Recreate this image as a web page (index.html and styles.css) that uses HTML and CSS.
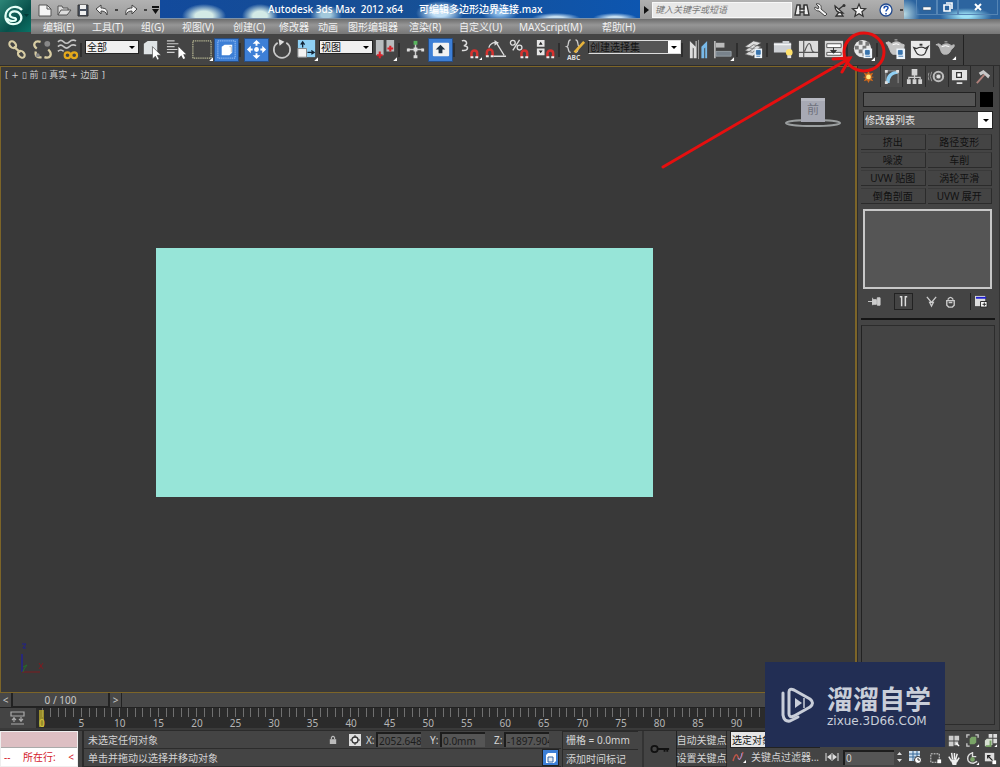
FILE: index.html
```
<!DOCTYPE html>
<html lang="zh-CN">
<head>
<meta charset="utf-8">
<title>Autodesk 3ds Max 2012 x64</title>
<link rel="stylesheet" href="styles.css">
</head>
<body>
<div class="app">
  <header class="header">
    <button class="app-button" aria-label="应用程序">
      <svg width="30" height="32" viewBox="0 0 30 32"><path d="M21 10C17 5 8 6 5 13c-2 7 2 12 9 11 6-1 8-6 5-10-3-4-9-3-10 0-1 3 3 4 5 4 2 1 1 3-2 3-3 0-5-1-6-3" fill="none" stroke="#e4fff7" stroke-width="2.2"/><path d="M23 14l5 0-2.500 3z" fill="#043a37"/></svg>
    </button>
    <div class="titlebar">
      <div class="quick">
        <button aria-label="新建"><svg width="16" height="14" viewBox="0 0 16 14"><path d="M2 2h8l4 4v7H2z" fill="#f4f4f4" stroke="#555"/><path d="M10 2v4h4" fill="none" stroke="#555"/></svg></button>
        <button aria-label="打开"><svg width="16" height="14" viewBox="0 0 16 14"><path d="M2 12V3h4l1 2h5v2M2 12l3-5h10l-4 5z" fill="#ddd" stroke="#555"/></svg></button>
        <button aria-label="保存"><svg width="16" height="14" viewBox="0 0 16 14"><path d="M3 2h10v11H3z" fill="#4b5360" stroke="#333"/><path d="M5 2h6v4H5zM5 8h6v4H5z" fill="#f0f0f0"/></svg></button>
        <button aria-label="撤销"><svg width="16" height="14" viewBox="0 0 16 14"><path d="M2 6l5-4v3c5 0 7 2 6 7-1-3-3-4-6-4v3z" fill="#f2f2f2" stroke="#444"/></svg></button>
        <i class="tick"></i>
        <button aria-label="重做"><svg width="16" height="14" viewBox="0 0 16 14"><path d="M14 6L9 2v3C4 5 2 7 3 12c1-3 3-4 6-4v3z" fill="#f2f2f2" stroke="#444"/></svg></button>
        <i class="tick"></i>
        <button aria-label="自定义快速访问"><svg width="7" height="8" viewBox="0 0 7 8"><path d="M0 0h7v2H0zM0 3h7L3.500 8z" fill="#111"/></svg></button>
      </div>
      <div class="title"><span>Autodesk 3ds Max&nbsp; 2012 x64</span><span>可编辑多边形边界连接.max</span></div>
      <div class="infocenter">
        <button class="reveal" aria-label="展开搜索"><svg width="5" height="8" viewBox="0 0 5 8"><path d="M0 0l5 4-5 4z" fill="#111"/></svg></button>
        <input class="search" type="text" placeholder="键入关键字或短语" aria-label="搜索">
        <button aria-label="查找"><svg width="18" height="16" viewBox="0 0 18 16"><path d="M4 3h3v4h4V3h3l2 10h-5v-3H7v3H2z" fill="#eee" stroke="#333" stroke-width="1.300"/><path d="M7 3v7M11 3v7" stroke="#333"/></svg></button>
        <button aria-label="密钥"><svg width="18" height="16" viewBox="0 0 18 16"><path d="M4 2c3-1 6 1 5 5l6 5-2 2-6-5C3 9 2 6 3 5l3 2 1-2z" fill="#f4f4f4" stroke="#444"/></svg></button>
        <button aria-label="通讯中心"><svg width="18" height="16" viewBox="0 0 18 16"><path d="M4 4c0 5 3 7 8 7zM8 7l4-3M8 10l-3 4h7l-2-3" fill="#eee" stroke="#333" stroke-width="1.300"/><circle cx="13" cy="3.500" r="1.500" fill="#333"/></svg></button>
        <button aria-label="收藏夹"><svg width="18" height="16" viewBox="0 0 18 16"><path d="M9 2l1.800 4.400 4.700.3-3.600 3 1.200 4.600L9 11.800l-4.100 2.500 1.200-4.600-3.600-3 4.700-.3z" fill="#f4f4f4" stroke="#333" stroke-width="1.200"/></svg></button>
        <button class="help" aria-label="帮助"><svg width="16" height="16" viewBox="0 0 16 16"><circle cx="8" cy="8" r="6" fill="#fff" stroke="#234a8d" stroke-width="1.300"/><path d="M6 6.500c0-3 4-3 4-.5 0 1.500-2 1.500-2 3.500M8 11v1.500" fill="none" stroke="#1b4fb0" stroke-width="1.500"/></svg></button>
        <i class="tick"></i>
      </div>
      <div class="window-buttons">
        <button aria-label="最小化"><svg width="12" height="10" viewBox="0 0 12 10"><path d="M2 5h8v3H2z" fill="#fff" stroke="#456"  stroke-width=".5"/></svg></button>
        <button aria-label="还原"><svg width="12" height="10" viewBox="0 0 12 10"><path d="M4 1h6v6M2 3h6v6H2z" fill="none" stroke="#fff" stroke-width="1.600"/></svg></button>
        <button class="close" aria-label="关闭"><svg width="12" height="10" viewBox="0 0 12 10"><path d="M3 2l6 6M9 2L3 8" stroke="#fff" stroke-width="2"/></svg></button>
      </div>
    </div>
    <nav class="menu">
      <button>编辑(E)</button><button>工具(T)</button><button>组(G)</button><button>视图(V)</button><button>创建(C)</button><button>修改器</button><button>动画</button><button>图形编辑器</button><button>渲染(R)</button><button>自定义(U)</button><button>MAXScript(M)</button><button>帮助(H)</button>
    </nav>
  </header>

  <div class="toolbar">
    <button class="tool" aria-label="选择并链接"><svg viewBox="0 0 24 24"><g fill="none" stroke="#d8cda4" stroke-width="2.200"><ellipse cx="7" cy="7" rx="4" ry="3" transform="rotate(45 7 7)"/><ellipse cx="16" cy="17" rx="4" ry="3" transform="rotate(45 16 17)"/><path d="M8 9l7 6"/></g></svg></button>
    <button class="tool" aria-label="断开链接"><svg viewBox="0 0 24 24"><g fill="none" stroke="#d8cda4" stroke-width="2.400"><path d="M10 4C4 2 1 7 6 11M14 20c6 2 9-3 4-8M5 14c-1 5 2 7 6 6"/></g><circle cx="17" cy="6" r="3" fill="#888"/><circle cx="7" cy="18" r="2" fill="#888"/></svg></button>
    <button class="tool" aria-label="绑定到空间扭曲"><svg viewBox="0 0 24 24"><path d="M2 4q3-3 6 0t6 0 7-1M2 9q3-3 6 0t6 0 7-1M2 14q3-3 6 0" fill="none" stroke="#c4c4c4" stroke-width="1.600"/><g fill="none" stroke="#e5a91b" stroke-width="2.200"><circle cx="12" cy="18" r="3"/><circle cx="19" cy="18" r="3"/></g></svg></button>
    <i class="sep"></i>
    <span class="combo combo-filter"><select aria-label="选择过滤器"><option>全部</option></select></span>
    <button class="tool" aria-label="选择对象"><svg viewBox="0 0 24 24"><path d="M4 6l4-3h10v11l-4 3H4z" fill="#dfe3e5"/><path d="M13 9v13l3-3 2 4 2-1-2-4h4z" fill="#fff" stroke="#444" stroke-width=".7"/></svg></button>
    <button class="tool" aria-label="按名称选择"><svg viewBox="0 0 24 24"><path d="M2 3h8M2 6h12M2 9h8M2 12h11M2 15h8" stroke="#ccc" stroke-width="1.300"/><path d="M14 9v12l3-3 2 4 2-1-2-4h3z" fill="#fff"/></svg></button>
    <button class="tool" aria-label="矩形选择区域"><svg viewBox="0 0 24 24"><path d="M3 3h19v18H3z" fill="none" stroke="#d5d5a8" stroke-width="1.300" stroke-dasharray="1 1"/><path d="M20 24l4-4v4z" fill="#fff"/></svg></button>
    <button class="tool on" aria-label="窗口/交叉"><svg viewBox="0 0 24 24"><path d="M3 3h18v18H3z" fill="none" stroke="#bcd8ff" stroke-dasharray="1 1"/><path d="M7 9l3-2h8v8l-3 3H7z" fill="#fff"/><path d="M15 9h2v6" stroke="#bbb" fill="none"/></svg></button>
    <i class="sep"></i>
    <button class="tool on" aria-label="选择并移动"><svg viewBox="0 0 24 24"><g fill="#fff"><path d="M12 2l4 4H8zM12 22l4-4H8zM2 12l4-4v8zM22 12l-4-4v8z"/><circle cx="12" cy="12" r="2.500"/></g><path d="M12 5v3m0 8v3M5 12h3m8 0h3" stroke="#fff" stroke-width="2"/></svg></button>
    <button class="tool" aria-label="选择并旋转"><svg viewBox="0 0 24 24"><path d="M17 5a8.500 8.500 0 1 1-9 0" fill="none" stroke="#c9c9c9" stroke-width="1.800"/><path d="M9 1l6 3-5 4z" fill="#ddd"/></svg></button>
    <button class="tool" aria-label="选择并缩放"><svg viewBox="0 0 24 24"><path d="M3 2h18v18H3z" fill="#8fd0f4"/><path d="M3 11h9v9H3z" fill="#f3f3f3" stroke="#888"/><path d="M8 10V5m-2 2l2-3 2 3M13 15h6m-2-2l3 2-3 2" fill="none" stroke="#123" stroke-width="1.300"/><path d="M20 24l4-4v4z" fill="#fff"/></svg></button>
    <span class="combo combo-coord"><select aria-label="参考坐标系"><option>视图</option></select></span>
    <button class="tool" aria-label="使用轴点中心"><svg viewBox="0 0 24 24"><path d="M2 2h8v16H2zM13 2h8v12h-8z" fill="#b9bcbe"/><path d="M6 14v7M3 18h6M17 8v6M14 11h6" stroke="#d6232a" stroke-width="2.200"/><path d="M20 24l4-4v4z" fill="#fff"/></svg></button>
    <i class="sep"></i>
    <button class="tool" aria-label="选择并操纵"><svg viewBox="0 0 24 24"><path d="M12 4v16M4 12h16" stroke="#ccc" stroke-width="1.500"/><path d="M10 3h4v4h-4z" fill="#58b45d"/><path d="M10 10h4v4h-4zM3 11h3v3H3zM18 11h3v3h-3zM10 18h4v3h-4z" fill="#ddd"/></svg></button>
    <button class="tool on" aria-label="键盘快捷键覆盖"><svg viewBox="0 0 24 24"><rect x="4" y="5" width="17" height="14" rx="1" fill="#f2f2f2"/><path d="M12 7l5 5h-3v4h-4v-4H7z" fill="#234"/></svg></button>
    <i class="sep"></i>
    <button class="tool" aria-label="捕捉开关"><svg viewBox="0 0 24 24"><path d="M3 3c5-2 7 4 2 5 6 0 5 6-2 5" fill="none" stroke="#ddd" stroke-width="1.600"/><path d="M13 20v-4a3 3 0 0 1 6 0v4" fill="none" stroke="#d6322f" stroke-width="2.600"/><path d="M12 20h3M17 20h3" stroke="#eee" stroke-width="2"/><path d="M21 23l3-3v3z" fill="#fff"/></svg></button>
    <button class="tool" aria-label="角度捕捉"><svg viewBox="0 0 24 24"><path d="M10 19h13M13 5l8 13M5 10c1-4 5-6 10-5" fill="none" stroke="#ddd" stroke-width="1.400"/><path d="M11 2l4 3-4 3" fill="#ddd"/><path d="M3 19v-4a3 3 0 0 1 6 0v4" fill="none" stroke="#d6322f" stroke-width="2.600"/><path d="M2 19h3M7 19h3" stroke="#eee" stroke-width="2"/></svg></button>
    <button class="tool" aria-label="百分比捕捉"><svg viewBox="0 0 24 24"><g fill="none" stroke="#ddd" stroke-width="1.400"><circle cx="4" cy="5" r="2.500"/><circle cx="11" cy="10" r="2.500"/><path d="M11 2L4 13"/></g><path d="M13 20v-4a3 3 0 0 1 6 0v4" fill="none" stroke="#d6322f" stroke-width="2.600"/><path d="M12 20h3M17 20h3" stroke="#eee" stroke-width="2"/></svg></button>
    <button class="tool" aria-label="微调器捕捉"><svg viewBox="0 0 24 24"><path d="M3 2h8v7H3zM3 11h8v7H3z" fill="#e5e5e5"/><path d="M5 7l2-3 2 3zM5 13l2 3 2-3z" fill="#222"/><path d="M14 20v-4a3 3 0 0 1 6 0v4" fill="none" stroke="#d6322f" stroke-width="2.600"/><path d="M13 20h3M18 20h3" stroke="#eee" stroke-width="2"/></svg></button>
    <i class="sep"></i>
    <button class="tool" aria-label="编辑命名选择集"><svg viewBox="0 0 24 24"><path d="M7 2C3 2 6 8 3 9c3 1 0 6 4 6M12 2c4 0 1 6 4 7-3 1 0 6-4 6" fill="none" stroke="#ccc" stroke-width="1.400"/><path d="M10 14l10-11 2 2-10 11z" fill="#e7b33b"/><text x="3" y="23" class="abc">ABC</text></svg></button>
    <span class="combo combo-sets"><select aria-label="命名选择集"><option>创建选择集</option></select></span>
    <i class="sep"></i>
    <button class="tool" aria-label="镜像"><svg viewBox="0 0 24 24"><path d="M3 3l6 6V3h1v18H7V11l-1-1v11H3z" fill="#ddd"/><path d="M12 2v20" stroke="#999"/><path d="M21 3l-6 6v12h3V11l1-1v11h2z" fill="#78b9e8"/></svg></button>
    <button class="tool" aria-label="对齐"><svg viewBox="0 0 24 24"><path d="M3 3v18" stroke="#ccc" stroke-width="1.500"/><path d="M4 5h9v5H4z" fill="#bbb"/><path d="M4 14h16v5H4z" fill="#78828b" stroke="#a9b2ba" stroke-width=".7"/><path d="M19 24l4-4v4z" fill="#fff"/></svg></button>
    <i class="sep"></i>
    <button class="tool" aria-label="层管理器"><svg viewBox="0 0 24 24"><path d="M3 9l9-6 8 2-9 6zM3 13l9-6 8 2-9 6zM3 17l9-6 8 2-9 6z" fill="#ddd" stroke="#555" stroke-width=".7"/><path d="M13 11h8v10h-8z" fill="#eef5fb"/><path d="M15 13h4v4h-4zM15 19h4" fill="#3874ad" stroke="#3874ad"/></svg></button>
    <i class="sep"></i>
    <button class="tool" aria-label="石墨建模工具"><svg viewBox="0 0 24 24"><path d="M2 5h9V3h7v2h2v10H2z" fill="#cdd0d4"/><path d="M2 7h18" stroke="#fff"/><circle cx="18" cy="15" r="3.500" fill="#ffe16b"/><path d="M16 18h4v3h-4z" fill="#ddd"/></svg></button>
    <button class="tool" aria-label="曲线编辑器"><svg viewBox="0 0 24 24"><path d="M2 3h20v17H2z" fill="#ddd"/><path d="M7 3v17M2 15h20M8 14c4-11 6-10 7-3 1 4 3 4 6 4" fill="none" stroke="#555" stroke-width="1.200"/></svg></button>
    <button class="tool" aria-label="图解视图"><svg viewBox="0 0 24 24"><path d="M3 3h19v17H3z" fill="#d8d8d8"/><path d="M5 6h15v4H5zM5 15h15v3H5z" fill="#fff" stroke="#555"/><path d="M12 10v4m-3-1h6l-3 3z" fill="#333" stroke="#333"/></svg></button>
    <i class="sep"></i>
    <button class="tool" aria-label="材质编辑器"><svg viewBox="0 0 24 24"><circle cx="11" cy="11" r="9" fill="#e8e8e8"/><path d="M7 3h4v4H7zM14 4h4v4h-4zM3 8h4v4H3zM11 8h4v4h-4zM7 12h4v4H7zM11 16h4v3h-4z" fill="#787878"/><path d="M12 11h9v10h-9z" fill="#eef5fb"/><path d="M14 13h4v4h-4zM14 19h5" fill="#3874ad" stroke="#3874ad"/><path d="M20 24l4-4v4z" fill="#fff"/></svg></button>
    <i class="sep wide"></i>
    <button class="tool" aria-label="渲染设置"><svg viewBox="0 0 24 24"><path d="M2 5l3-1 3 2c1-1 3-2 5-2s4 1 5 2l3 1c0 5-2 9-5 10H9C6 15 6 9 2 5zM11 2h3" fill="#c4c4c4" stroke="#c4c4c4"/><path d="M9 7q4-2 7 0" fill="none" stroke="#fff"/><path d="M13 11h9v11h-9z" fill="#eef5fb"/><path d="M15 13h4v4h-4zM15 19h5" fill="#3874ad" stroke="#3874ad"/></svg></button>
    <button class="tool" aria-label="渲染帧窗口"><svg viewBox="0 0 24 24"><path d="M2 3h20v18H2z" fill="#e9e9e9"/><path d="M5 10l3 1c3-2 7-2 9 0l3-2-2 4c-1 4-2 5-5 5s-5-1-6-4z" fill="#eee" stroke="#333" stroke-width="1.300"/><path d="M11 7h3" stroke="#333" stroke-width="2"/></svg></button>
    <button class="tool" aria-label="渲染产品"><svg viewBox="0 0 24 24"><path d="M2 7l3-1 3 2c1-1 3-2 5-2s4 1 5 2l3-1c1 3-3 4-4 7-1 2-3 3-5 3-3 0-4-1-5-4-1-4-3-6-5-6zM11 4h3" fill="#b8b8b8" stroke="#b8b8b8"/><path d="M8 9q4-2 8 0" stroke="#fff" fill="none"/><path d="M19 23l4-4v4z" fill="#fff"/></svg></button>
    <i class="toolbar-end"></i>
  </div>

  <main class="main">
    <section class="stage">
      <div class="viewport">
        <div class="viewport-label">[ + ▯ 前 ▯ 真实 + 边面 ]</div>
        <div class="plane"></div>
        <svg class="viewcube" width="60" height="32" viewBox="0 0 60 32"><ellipse cx="29" cy="26" rx="27" ry="3" fill="none" stroke="#9b9fa0" stroke-width="2"/><path d="M17 1h24v24H17z" fill="#a7a9b4"/><path d="M17 1h24v3H17z" fill="#b7b9c2"/><text x="29" y="17" text-anchor="middle" class="cube-text">前</text></svg>
        <svg class="axis" width="34" height="34" viewBox="0 0 34 34"><path d="M5 11v18" stroke="#20209c" stroke-width="1.300"/><path d="M5 29h18" stroke="#7c1c20"/><path d="M6 24l4-2-3 4-1 3" stroke="#236e2c" fill="none"/><path d="M5 1h4l-3 4h3" stroke="#20208c" fill="none"/><path d="M22 20l4 6M26 20l-4 6" stroke="#7c1c20"/></svg>
      </div>
      <div class="slider">
        <button aria-label="上一帧">&lt;</button><button class="thumb">0 / 100</button><button aria-label="下一帧">&gt;</button>
      </div>
      <div class="track">
        <button class="curve-toggle" aria-label="打开迷你曲线编辑器"><svg width="16" height="14" viewBox="0 0 16 14"><path d="M1 1h13v4H1zM1 13h13M4 6v5M11 6v5M2 9l2-2 2 2M9 8l2 2 2-2" fill="none" stroke="#aaa" stroke-width="1.200"/></svg></button>
        <div class="ruler"><span class="current">0</span><span class="single">5</span><span>10</span><span>15</span><span>20</span><span>25</span><span>30</span><span>35</span><span>40</span><span>45</span><span>50</span><span>55</span><span>60</span><span>65</span><span>70</span><span>75</span><span>80</span><span>85</span><span>90</span><span>95</span></div>
      </div>
    </section>

    <aside class="panel">
      <div class="tabs">
        <button aria-label="创建"><svg viewBox="0 0 18 18"><path d="M9 3l1.500 3L14 5l-2 4 3 .5-3 1 2 3.500-3.500-1L9 16l-1.500-3L4 14l2-3.500-3-1L6 9 4 5l3.500 1z" fill="#d36a1b"/><circle cx="9" cy="9.500" r="2.500" fill="#ffe780"/></svg></button>
        <button class="active" aria-label="修改"><svg viewBox="0 0 18 18"><path d="M3 16C3 8 8 3 16 3v3C10 6 7 10 7 16z" fill="#8fcff4"/><path d="M3 16V3h13v13" fill="none" stroke="#999"/><path d="M2 2h3v3H2zM14 2h3v3h-3zM2 14h3v3H2z" fill="#ddd"/></svg></button>
        <button aria-label="层次"><svg viewBox="0 0 18 18"><path d="M6 1h6v7H6zM1 12h4v5H1zM7 12h4v5H7zM13 12h4v5h-4z" fill="#d2d2d2"/><path d="M9 7v5M3 12V10h12v2" fill="none" stroke="#ccc" stroke-width="1.300"/></svg></button>
        <button aria-label="运动"><svg viewBox="0 0 18 18"><circle cx="11" cy="9" r="5" fill="none" stroke="#bbb" stroke-width="2.200"/><circle cx="11" cy="9" r="2.500" fill="#ddd" stroke="#777"/><path d="M4 4q-3 5 0 10M1 5q-2 4 0 8" fill="none" stroke="#999"/></svg></button>
        <button aria-label="显示"><svg viewBox="0 0 18 18"><path d="M1 2h16v11H1zM6 15h6v2H6z" fill="#e2e2e2"/><path d="M6 5h5v5H6z" fill="#fff" stroke="#333" stroke-width="1.300"/></svg></button>
        <button aria-label="工具"><svg viewBox="0 0 18 18"><path d="M3 16L12 6" stroke="#b1817b" stroke-width="2"/><path d="M5 5l5-3 7 6-2 3-5-5-3 2z" fill="#c9c9c9"/></svg></button>
      </div>
      <div class="name-row"><input type="text" aria-label="对象名称"><button class="swatch" aria-label="对象颜色"></button></div>
      <span class="combo combo-mods"><select aria-label="修改器列表"><option>修改器列表</option></select></span>
      <div class="mod-buttons">
        <button>挤出</button><button>路径变形</button><button>噪波</button><button>车削</button><button>UVW 贴图</button><button>涡轮平滑</button><button>倒角剖面</button><button>UVW 展开</button>
      </div>
      <div class="stack"></div>
      <div class="stack-tools">
        <button aria-label="锁定堆栈"><svg viewBox="0 0 16 14"><path d="M1 7h5M6 3v8M6 5h4v5H6zM11 3v8h3V3z" fill="#ccc" stroke="#ccc"/></svg></button>
        <button class="pressed" aria-label="显示最终结果"><svg viewBox="0 0 16 14"><path d="M4 2h2v10M12 2h-2v10" fill="none" stroke="#ddd" stroke-width="1.600"/></svg></button>
        <button aria-label="使唯一"><svg viewBox="0 0 16 14"><path d="M3 2l5 6 5-6M6 8h4l-2 4z" fill="none" stroke="#ccc" stroke-width="1.400"/></svg></button>
        <button aria-label="移除修改器"><svg viewBox="0 0 16 14"><path d="M4 6h8v5l-2 2H6l-2-2zM5 5q3-5 6 0M6 8h4" fill="none" stroke="#ccc" stroke-width="1.500"/></svg></button>
        <button class="config" aria-label="配置修改器集"><svg viewBox="0 0 16 14"><path d="M1 1h11v11H1z" fill="#ddd"/><path d="M2 2h11v2H2z" fill="#2020d0"/><path d="M7 7h7v6H7z" fill="#fff" stroke="#222"/><path d="M9 10h4M11 8v4" stroke="#222"/></svg></button>
      </div>
      <div class="rollouts"></div>
    </aside>
  </main>

  <footer class="status">
    <div class="listener"><div class="macro"></div><div class="script-line"><span>--</span><span>所在行:</span><span>&lt;</span></div></div>
    <div class="messages">
      <div class="row">
        <div class="message">未选定任何对象</div>
        <button class="mini" aria-label="选择锁定切换"><svg width="8" height="10" viewBox="0 0 10 12"><path d="M1 5h8v6H1z" fill="#bbb"/><path d="M3 5V3q2-3 4 0v2M4 8h2" fill="none" stroke="#bbb" stroke-width="1.400"/></svg></button>
        <button class="mini" aria-label="绝对模式"><svg width="12" height="12" viewBox="0 0 12 12"><path d="M0 0h12v12H0z" fill="#ddd"/><circle cx="6" cy="6" r="3" fill="#eee" stroke="#333" stroke-width="1.300"/><path d="M6 1v2M6 9v2M1 6h2M9 6h2" stroke="#333"/></svg></button>
        <div class="coords">
          <label class="coord">X:<input type="text" value="2052.648mm"></label>
          <label class="coord">Y:<input type="text" value="0.0mm"></label>
          <label class="coord">Z:<input type="text" value="-1897.904mm"></label>
        </div>
      </div>
      <div class="row">
        <div class="message">单击并拖动以选择并移动对象</div>
        <button class="degrade" aria-label="自适应降级"><svg width="12" height="12" viewBox="0 0 12 12"><path d="M1 3l2-2h8v8l-2 2H1z" fill="#fff"/><path d="M3 5h5v5H3z" fill="#e6ebf2" stroke="#3566a8"/></svg></button>
      </div>
    </div>
    <div class="grid-info"><div class="field">栅格 = 0.0mm</div><button class="field">添加时间标记</button></div>
    <button class="set-key" aria-label="设置关键点"><svg width="20" height="12" viewBox="0 0 22 12"><circle cx="5" cy="6" r="3.500" fill="none" stroke="#111" stroke-width="2"/><path d="M8 6h13M16 6v3M19 6v3" stroke="#111" stroke-width="2"/></svg></button>
    <div class="keys"><button>自动关键点</button><button>设置关键点</button></div>
    <div class="key-modes">
      <select class="key-target" aria-label="关键点对象"><option>选定对象</option></select>
      <div class="row">
        <button class="mini tangent" aria-label="默认切线"><svg width="16" height="14" viewBox="0 0 16 14"><path d="M2 11Q5 1 7 7t5-5" fill="none" stroke="#bd5548" stroke-width="1.500"/><path d="M7 8q2 5 4-5" fill="none" stroke="#8b8fd8"/><path d="M12 13l3-3v3z" fill="#fff"/></svg></button>
        <button class="filters">关键点过滤器...</button>
        <button class="mini" aria-label="关键点模式"><svg width="14" height="8" viewBox="0 0 14 8"><path d="M1 0v8M13 0v8M7 0v8" stroke="#ddd"/><path d="M6 1v6L2 4zM8 1v6l4-3z" fill="#ddd"/></svg></button>
        <input class="frame" type="text" value="0" aria-label="当前帧">
        <span class="spinner"><svg width="7" height="12" viewBox="0 0 7 12"><path d="M1 4l2.500-3L6 4zM1 8l2.500 3L6 8z" fill="#ddd"/></svg></span>
        <button class="mini" aria-label="时间配置"><svg width="14" height="14" viewBox="0 0 14 14"><path d="M1 1h11v10H1z" fill="#cfe0ee"/><path d="M1 4h11M1 7h11M5 1v10M9 1v10" stroke="#356796"/><circle cx="10" cy="10" r="3.500" fill="#fff" stroke="#333"/><path d="M10 8v2h2" fill="none" stroke="#333"/></svg></button>
      </div>
    </div>
    <div class="nav">
      <i></i>
      <button aria-label="缩放所有视图"><svg viewBox="0 0 16 16"><path d="M3 3h5v5H3zM9 3h5v5H9zM3 9h5v5H3zM9 9h4v4H9z" fill="#ccc"/><path d="M11 11l3 3" stroke="#fff" stroke-width="1.500"/></svg></button>
      <button aria-label="最大化显示"><svg viewBox="0 0 16 16"><path d="M2 5V2h3M11 2h3v3M2 11v3h3" fill="none" stroke="#ccc" stroke-width="1.400"/><path d="M5 6l2-2h5v6l-2 2H5z" fill="#7aa467"/><path d="M12 15l3-3v3z" fill="#fff"/></svg></button>
      <button aria-label="所有视图最大化显示"><svg viewBox="0 0 16 16"><path d="M6 1h4v4H6zM11 1h4v4h-4zM11 6h4v5h-4z" fill="#ddd"/><path d="M2 8l2-2h6v6l-2 2H2z" fill="#d6dfd1"/><path d="M8 8v6H3" stroke="#76a263" stroke-width="2" fill="none"/><path d="M12 15l3-3v3z" fill="#fff"/></svg></button>
      <button aria-label="缩放区域"><svg viewBox="0 0 16 16"><path d="M3 3h9v9H3z" fill="none" stroke="#ddd" stroke-dasharray="2 1"/><path d="M10 9h4v4h-4z" fill="#fff"/></svg></button>
      <button aria-label="平移视图"><svg viewBox="0 0 16 16"><path d="M3 6l3 5M6 2l1 7M9 2v7M12 3l-2 7M14 7l-3 5" stroke="#eee" stroke-width="1.600"/><path d="M5 9h7l-1 6H7z" fill="#eee"/></svg></button>
      <button aria-label="环绕"><svg viewBox="0 0 16 16"><path d="M8 2c-7 2-7 11 1 11l4-2M8 1v5h4" fill="none" stroke="#ddd" stroke-width="1.500"/><circle cx="8" cy="9" r="2.500" fill="#7aa467"/><path d="M12 15l3-3v3z" fill="#fff"/></svg></button>
      <button aria-label="最大化视口切换"><svg viewBox="0 0 16 16"><path d="M2 2h10v9H2z" fill="#ddd"/><path d="M5 5l6 6M5 8V5h3" fill="none" stroke="#222" stroke-width="1.300"/><path d="M10 10h4v4h-4z" fill="#fff"/></svg></button>
    </div>
  </footer>

  <svg class="annotation" width="240" height="150" viewBox="0 0 240 150"><g fill="none" stroke="#e60f0f" stroke-width="3" stroke-linecap="round"><ellipse cx="215" cy="32" rx="20" ry="19"/><path d="M14 147L201 38M184 39l17-1-8 14"/></g></svg>

  <div class="watermark">
    <svg width="36" height="38" viewBox="0 0 36 38"><g fill="none" stroke="#c9ced9" stroke-width="3" stroke-linejoin="round" stroke-linecap="round"><path d="M9 28V6q0-4 5-2l16 9q5 4 0 8l-16 9q-5 2-5-2z"/><path d="M3 7v22q1 7 7 6l8-4"/></g><path d="M15 12v10l7-5z" fill="#c9ced9"/><path d="M24 12v10" stroke="#c9ced9" stroke-width="1.500"/></svg>
    <div class="brand"><strong>溜溜自学</strong><span>zixue.3D66.COM</span></div>
  </div>
</div>
</body>
</html>
```

FILE: styles.css
```
* { box-sizing: border-box; }
body { margin: 0; background: #444; }
button, input, select { font: inherit; color: inherit; margin: 0; padding: 0; border: 0; border-radius: 0; background: none; }
button { display: flex; align-items: center; justify-content: center; white-space: nowrap; }
input { min-width: 0; }
svg { display: block; flex: none; }

.app {
  position: relative;
  display: flex;
  flex-direction: column;
  min-height: 100vh;
  overflow: hidden;
  color: #d4d4d4;
  font: 10px/14px "Noto Sans", "Noto Sans CJK SC", sans-serif;
}

/* Title bar and menu */
.header { display: grid; grid-template-columns: 31px 1fr; grid-template-rows: 19px 15px; background: #444; }
.app-button { grid-row: span 2; align-self: start; background: linear-gradient(135deg, #2c8577, #07504a 60%, #0a7467); height: 32px; }
.titlebar { display: flex; min-width: 0; }
.quick { display: flex; align-items: center; gap: 3px; width: 129px; padding-left: 6px; background: linear-gradient(#b2b2b2, #9b9b9b); }
.tick { width: 3px; height: 2px; background: #444; }
.quick .tick { margin: 0 2px; }
.title {
  flex: 1;
  display: flex;
  gap: 16px;
  padding-left: 108px;
  align-items: center;
  overflow: hidden;
  white-space: nowrap;
  color: #fff;
  font-weight: 500;
  background:
    radial-gradient(ellipse 22px 12px at 44px 16px, #d3eae6 40%, transparent),
    radial-gradient(ellipse 18px 12px at 100px 16px, #d3eae6 40%, transparent),
    radial-gradient(ellipse 16px 10px at 166px 15px, #a3c9dc 30%, transparent),
    radial-gradient(ellipse 24px 12px at 280px 13px, #bfdef5 30%, transparent),
    radial-gradient(ellipse 18px 9px at 340px 13px, #8cbce8 20%, transparent),
    radial-gradient(ellipse 24px 5px at 396px 18px, #c5def0 30%, transparent),
    radial-gradient(ellipse 22px 5px at 455px 18px, #c5def0 30%, transparent),
    linear-gradient(90deg, #124a9c, #174f94 50%, #0d56b0);
  border-bottom: 1px solid #7f93a8;
}
.infocenter { display: flex; align-items: center; width: 264px; background: linear-gradient(#b0b0b0, #999); }
.infocenter button { width: 19px; }
.infocenter .reveal { width: 12px; }
.infocenter .help { width: 24px; margin: 0 2px 0 6px; }
.search { width: 140px; height: 16px; padding: 0 2px; background: #e8e8e8; border: 1px solid #f8f8f8; font-size: 9px; font-style: italic; }
.search::placeholder { color: #777; opacity: 1; }
.window-buttons { display: flex; width: 96px; padding: 0 2px 4px 12px; background: radial-gradient(ellipse 26px 8px at 62px 16px, #9ee2f6 20%, transparent), radial-gradient(circle at 0 14px, #b9dbe4, transparent 16px), #2c649f; }
.window-buttons button { width: 21px; border: 1px solid #5585b5; border-top: 0; }
.window-buttons .close { flex: 1; }
.menu {
  display: grid;
  grid-template-columns: 49px 49px 41px 51px 46px 39px 30px 61px 50px 60px 83px 50px;
  padding-left: 12px;
  background: linear-gradient(#6d6d6d, #969696 40%, #767676);
  color: #f0f0f0;
}
.menu button { justify-content: flex-start; }

/* Main toolbar */
.toolbar { display: flex; height: 32px; padding-left: 5px; align-items: center; background: #444; border-bottom: 1px solid #2d2d2d; }
.tool { width: 25px; height: 24px; }
.tool svg { width: 23px; height: 23px; }
.tool.on { background: #3d7fd6; border: 1px solid #284f86; }
.sep { width: 5px; height: 14px; border-left: 2px solid #2e2e2e; }
.sep.wide { width: 7px; }
.toolbar-end { width: 6px; height: 30px; border-right: 1px solid #222; }
.abc { font-size: 7px; font-weight: 700; fill: #ddd; }
.combo { position: relative; display: flex; height: 14px; color: #111; background: #f0f0f0; border: 1px solid #222; align-self: flex-start; margin-top: 6px; }
.combo select { width: 100%; padding-left: 1px; line-height: 12px; appearance: none; outline: 0; }
.combo::after { content: ""; position: absolute; right: 3px; top: 5px; border: 3px solid transparent; border-top-color: #000; pointer-events: none; }
.combo-filter { width: 54px; }
.combo-coord { width: 54px; }
.combo-sets { width: 93px; background: linear-gradient(90deg, #555 79px, #fff 79px); border-color: #ddd; border-left-color: #222; }

/* Viewport, time slider and command panel */
.main { flex: 1; display: grid; grid-template-columns: 1fr 143px; }
.stage { display: flex; flex-direction: column; min-width: 0; }
.viewport { position: relative; flex: 1; background: #393939; border: 1px solid #7d6528; border-width: 1px 2px 1px 1px; }
.viewport-label { padding: 1px 4px; color: #ccc; font-family: "DejaVu Sans", "Noto Sans CJK SC", sans-serif; font-size: 9px; word-spacing: normal; }
.plane { position: absolute; left: 155px; top: 181px; width: 497px; height: 249px; background: #97e5d8; }
.viewcube { position: absolute; right: 11px; top: 30px; }
.cube-text { font-size: 12px; fill: #70737e; }
.axis { position: absolute; left: 16px; bottom: 15px; }
.slider { display: flex; height: 15px; background: #484848; border-bottom: 1px solid #222; color: #c8c8c8; }
.slider button { width: 12px; border-right: 1px solid #222; }
.slider .thumb { width: 98px; border: 1px solid #222; border-width: 0 2px 1px 1px; }
.track { display: flex; height: 22px; background: #2b2b2b; border-bottom: 2px solid #3a3a3a; }
.curve-toggle { width: 36px; background: #444; }
.ruler { flex: 1; display: flex; margin: 0 44px 0 6px; }
.ruler span {
  flex: 1 1 0;
  min-width: 0;
  padding-top: 9px;
  line-height: 12px;
  color: #b5b5b5;
  background: repeating-linear-gradient(90deg, #707070 0 1px, transparent 1px 20%) 0 0 / 100% 9px no-repeat;
  text-indent: -5px;
}
.ruler .single { text-indent: -2px; }
.ruler .current { position: relative; text-indent: -3px; color: #e9e16b; }
.ruler .current::before { content: ""; position: absolute; left: -3px; top: 2px; width: 5px; height: 17px; background: #c9b82c; opacity: .7; }

.panel { display: flex; flex-direction: column; padding: 0 4px 0 3px; background: #444; border-left: 1px solid #2c2c2c; border-right: 1px solid #333; }
.tabs { display: flex; height: 23px; padding-bottom: 2px; margin: 0 1px 0 -3px; }
.tabs button { flex: 1; border-right: 1px solid #2a2a2a; }
.tabs svg { width: 17px; height: 17px; }
.tabs .active { background: #4b4b4b; }
.name-row { display: flex; gap: 4px; margin: 3px 2px 4px; height: 15px; }
.name-row input { flex: 1; background: #555; border: 1px solid #222; padding: 0 3px; }
.swatch { width: 13px; background: #000; }
.combo-mods { height: 18px; margin: 0 2px; align-self: stretch; color: #e2e2e2; border-color: #222; background: linear-gradient(#fff, #fff) 100% 0 / 14px 100% no-repeat, #555; }
.combo-mods::after { top: 7px; }
.mod-buttons { display: grid; grid-template-columns: 1fr 1fr; gap: 2px; margin: 5px 3px 0 0; }
.mod-buttons button { height: 16px; color: #111; border: 1px solid #2b2b2b; border-width: 1px 1px 1px 0; border-top-color: #3a3a3a; }
.stack { height: 80px; margin: 5px 3px 0 2px; background: #555; border: 2px solid #c8c8c8; }
.stack-tools { display: flex; height: 24px; padding-left: 4px; align-items: center; margin-bottom: 12px; }
.stack-tools button { width: 19px; height: 17px; }
.stack-tools svg { width: 15px; height: 13px; }
.stack-tools .pressed { margin: 0 9px 0 10px; border: 1px solid #222; }
.stack-tools .config { margin-left: 10px; padding-left: 3px; border-left: 1px solid #222; }
.rollouts { flex: 1; margin: 0 0 5px; border: 1px solid #2c2c2c; border-left-color: #222; box-shadow: 0 -5px 0 0 #444, 0 -7px 0 0 #151515; }

/* Status bar */
.status { display: flex; height: 37px; background: #444; border-top: 1px solid #2b2b2b; }
.row { display: flex; align-items: center; height: 18px; }
.listener { width: 78px; padding: 1px; background: #eee; color: #d3202c; }
.macro { height: 16px; background: #ddbfc3; border-bottom: 1px solid #aaa; }
.script-line { display: flex; justify-content: space-between; padding: 2px 3px; background: #fff; height: 18px; }
.messages { flex: 1; padding-left: 4px; }
.messages .row { border-bottom: 1px solid #2c2c2c; }
.message { flex: 1; padding-left: 4px; border-left: 2px solid #2a2a2a; height: 18px; line-height: 18px; }
.mini { width: 22px; flex: none; }
.coords { display: flex; gap: 9px; margin-right: 12px; }
.coord { display: flex; align-items: center; width: 55px; }
.coord input { width: 45px; height: 15px; padding-left: 1px; background: #555; border: 1px solid #1d1d1d; border-width: 2px 0 0 2px; color: #1c1c1c; margin-left: auto; }
.degrade { width: 17px; height: 17px; margin-right: 2px; background: #3d7fd6; border: 1px solid #222; }
.grid-info { display: flex; flex-direction: column; width: 83px; padding-left: 1px; border-right: 2px solid #333; }
.field { width: 76px; height: 18px; padding-left: 3px; line-height: 16px; text-align: left; justify-content: flex-start; border: 1px solid #2a2a2a; border-width: 1px 0 0 1px; }
.set-key { width: 33px; border-right: 1px solid #222; }
.keys { width: 50px; }
.keys button { width: 50px; height: 18px; border: 1px solid #2a2a2a; border-width: 0 1px 1px 0; }
.key-modes { width: 199px; padding-left: 2px; }
.key-target { display: block; width: 90px; height: 17px; padding-left: 1px; margin-left: 1px; color: #111; background: #e6e6e6; appearance: none; border: 1px solid #222; }
.tangent { width: 20px; }
.filters { width: 72px; }
.frame { width: 51px; height: 15px; padding-left: 1px; background: #555; border: 1px solid #1d1d1d; border-width: 2px 0 0 2px; }
.spinner { width: 10px; padding-left: 2px; }
.nav { display: grid; grid-template-columns: repeat(4, 1fr); width: 74px; }
.nav svg { width: 15px; height: 15px; }

/* Overlays */
.annotation { position: absolute; right: 111px; top: 20px; pointer-events: none; }
.watermark { position: absolute; right: 55px; bottom: 20px; display: flex; align-items: center; gap: 11px; width: 180px; height: 85px; padding-left: 15px; background: #222e54; color: #c9ced9; }
.brand strong, .brand span { display: block; white-space: nowrap; }
.brand strong { font: 700 26px/32px "Noto Sans CJK SC", sans-serif; }
.brand span { font: 12px/14px "DejaVu Sans", sans-serif; }
```
